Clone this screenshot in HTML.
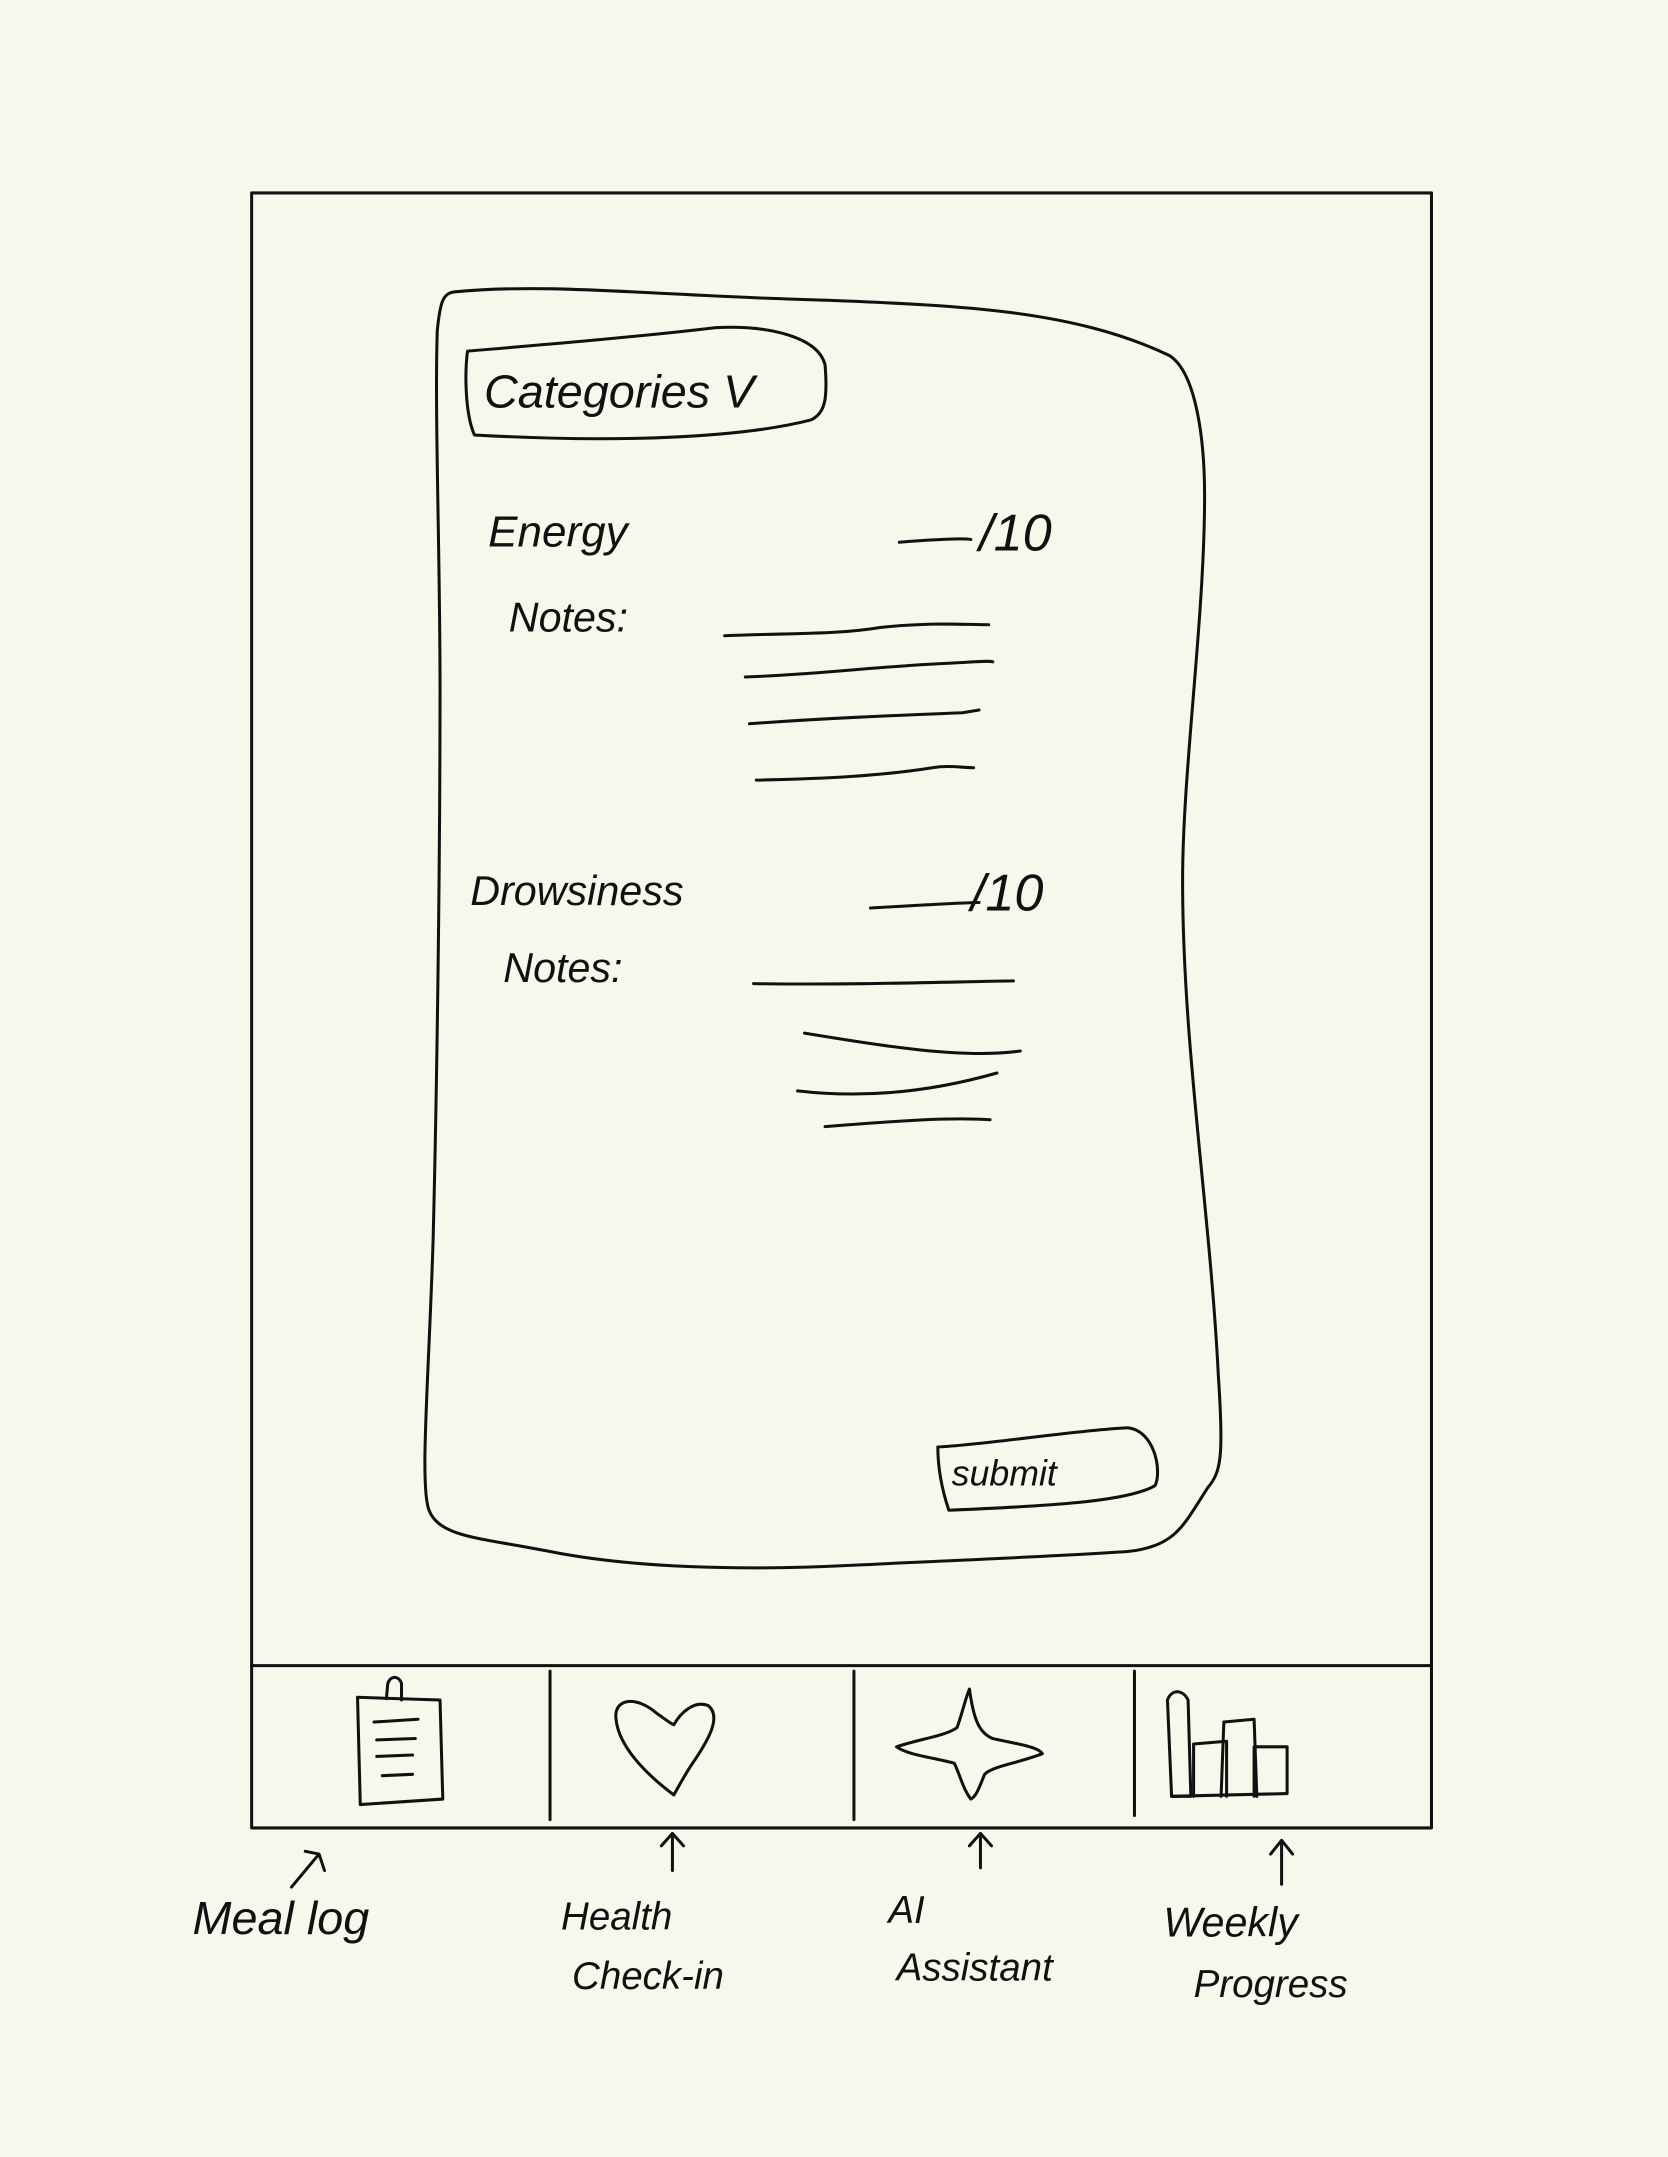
<!DOCTYPE html>
<html><head><meta charset="utf-8"><style>
html,body{margin:0;padding:0;background:#f8f7ec;}
svg{display:block}
text{font-family:"Liberation Sans",sans-serif;fill:#111}
</style></head><body>
<svg width="1668" height="2157" viewBox="0 0 1213 1568" xmlns="http://www.w3.org/2000/svg">
<rect width="1213" height="1568" fill="#f8f7ec"/>
<g fill="none" stroke="#111" stroke-width="2.2" stroke-linecap="round" stroke-linejoin="round">
<rect x="183" y="140" width="858" height="1189"/>
<line x1="183" y1="1211" x2="1041" y2="1211"/>
<line x1="400" y1="1215" x2="400" y2="1323"/>
<line x1="621" y1="1215" x2="621" y2="1323"/>
<line x1="825" y1="1215" x2="825" y2="1320"/>
<path d="M330 212 C400 205 480 215 600 218 C700 222 780 225 850 258 C870 270 876 320 876 360 C876 450 860 560 860 640 C860 760 880 880 886 1000 C890 1060 888 1070 878 1082 C860 1110 855 1124 820 1128 C760 1132 700 1134 620 1138 C540 1142 460 1140 400 1128 C350 1118 320 1118 312 1098 C305 1080 312 1000 315 900 C318 780 320 620 320 500 C320 400 316 300 318 240 C320 220 322 213 330 212 Z"/>
<path d="M340 255 C400 250 460 245 520 238 C560 236 595 245 600 265 C602 290 600 300 590 305 C540 318 450 322 345 316 C338 300 338 270 340 255 Z"/>
<path d="M527 462 C580 460 610 461 640 456 C680 452 700 454 719 454"/>
<path d="M542 492 C600 490 640 484 690 482 C710 481 720 480 722 481"/>
<path d="M545 526 C600 522 650 520 700 518 C712 516 712 516 712 516"/>
<path d="M550 567 C600 566 640 564 678 558 C690 556 700 558 708 558"/>
<path d="M548 715 C620 716 680 714 737 713"/>
<path d="M585 751 C640 760 700 770 742 764"/>
<path d="M580 793 C640 800 690 790 725 780"/>
<path d="M600 819 C650 815 690 812 720 814"/>
<path d="M654 394 C680 392 700 391 706 392"/>
<path d="M633 660 C670 658 700 656 712 656"/>
<path d="M682 1052 C720 1050 780 1040 820 1038 C840 1040 845 1070 840 1080 C820 1092 760 1095 690 1098 C684 1080 682 1065 682 1052 Z"/>
<!-- clipboard -->
<path d="M260 1234 L320 1236 L322 1308 L262 1312 Z"/>
<path d="M281 1235 L282 1224 C284 1218 290 1218 292 1224 L292 1236"/>
<path d="M272 1252 L304 1250 M274 1265 L302 1264 M274 1277 L300 1276 M278 1291 L300 1290"/>
<!-- heart -->
<path d="M490 1305 C470 1290 450 1270 448 1250 C446 1235 462 1232 478 1246 C484 1250 486 1252 490 1254 C495 1245 505 1236 515 1240 C525 1248 515 1265 505 1280 C498 1290 493 1300 490 1305"/>
<!-- star -->
<path d="M705 1228 C708 1250 712 1260 722 1264 C740 1268 755 1270 758 1275 C740 1282 722 1284 716 1290 C712 1300 710 1306 706 1308 C700 1300 698 1290 694 1282 C680 1278 660 1276 652 1270 C670 1264 688 1262 696 1256 C700 1245 702 1235 705 1228 Z"/>
<!-- bars -->
<path d="M852 1306 L849 1236 C852 1228 860 1228 864 1236 L866 1306 Z"/>
<path d="M868 1306 L868 1268 L892 1266 L892 1306"/>
<path d="M888 1306 L890 1252 L912 1250 L914 1306"/>
<path d="M912 1306 L912 1270 L936 1270 L936 1304 L852 1306"/>
<!-- arrows -->
<path d="M212 1372 L232 1348 M222 1346 L232 1348 L236 1360"/>
<path d="M489 1360 L489 1336 M481 1342 L489 1333 L497 1342"/>
<path d="M713 1358 L713 1336 M705 1342 L713 1333 L721 1342"/>
<path d="M932 1370 L932 1340 M924 1348 L932 1338 L940 1348"/>
</g>
<text x="352" y="296" font-size="34" font-style="italic">Categories V</text>
<text x="355" y="397" font-size="32" font-style="italic">Energy</text>
<text x="712" y="400" font-size="38" font-style="italic">/10</text>
<text x="370" y="459" font-size="30" font-style="italic">Notes:</text>
<text x="342" y="658" font-size="30" font-style="italic">Drowsiness</text>
<text x="706" y="662" font-size="38" font-style="italic">/10</text>
<text x="366" y="714" font-size="30" font-style="italic">Notes:</text>
<text x="692" y="1080" font-size="26" font-style="italic">submit</text>
<text x="140" y="1406" font-size="34" font-style="italic">Meal log</text>
<text x="408" y="1403" font-size="28" font-style="italic">Health</text>
<text x="416" y="1446" font-size="28" font-style="italic">Check-in</text>
<text x="646" y="1398" font-size="28" font-style="italic">AI</text>
<text x="652" y="1440" font-size="28" font-style="italic">Assistant</text>
<text x="846" y="1408" font-size="30" font-style="italic">Weekly</text>
<text x="868" y="1452" font-size="28" font-style="italic">Progress</text>
</svg>
</body></html>
